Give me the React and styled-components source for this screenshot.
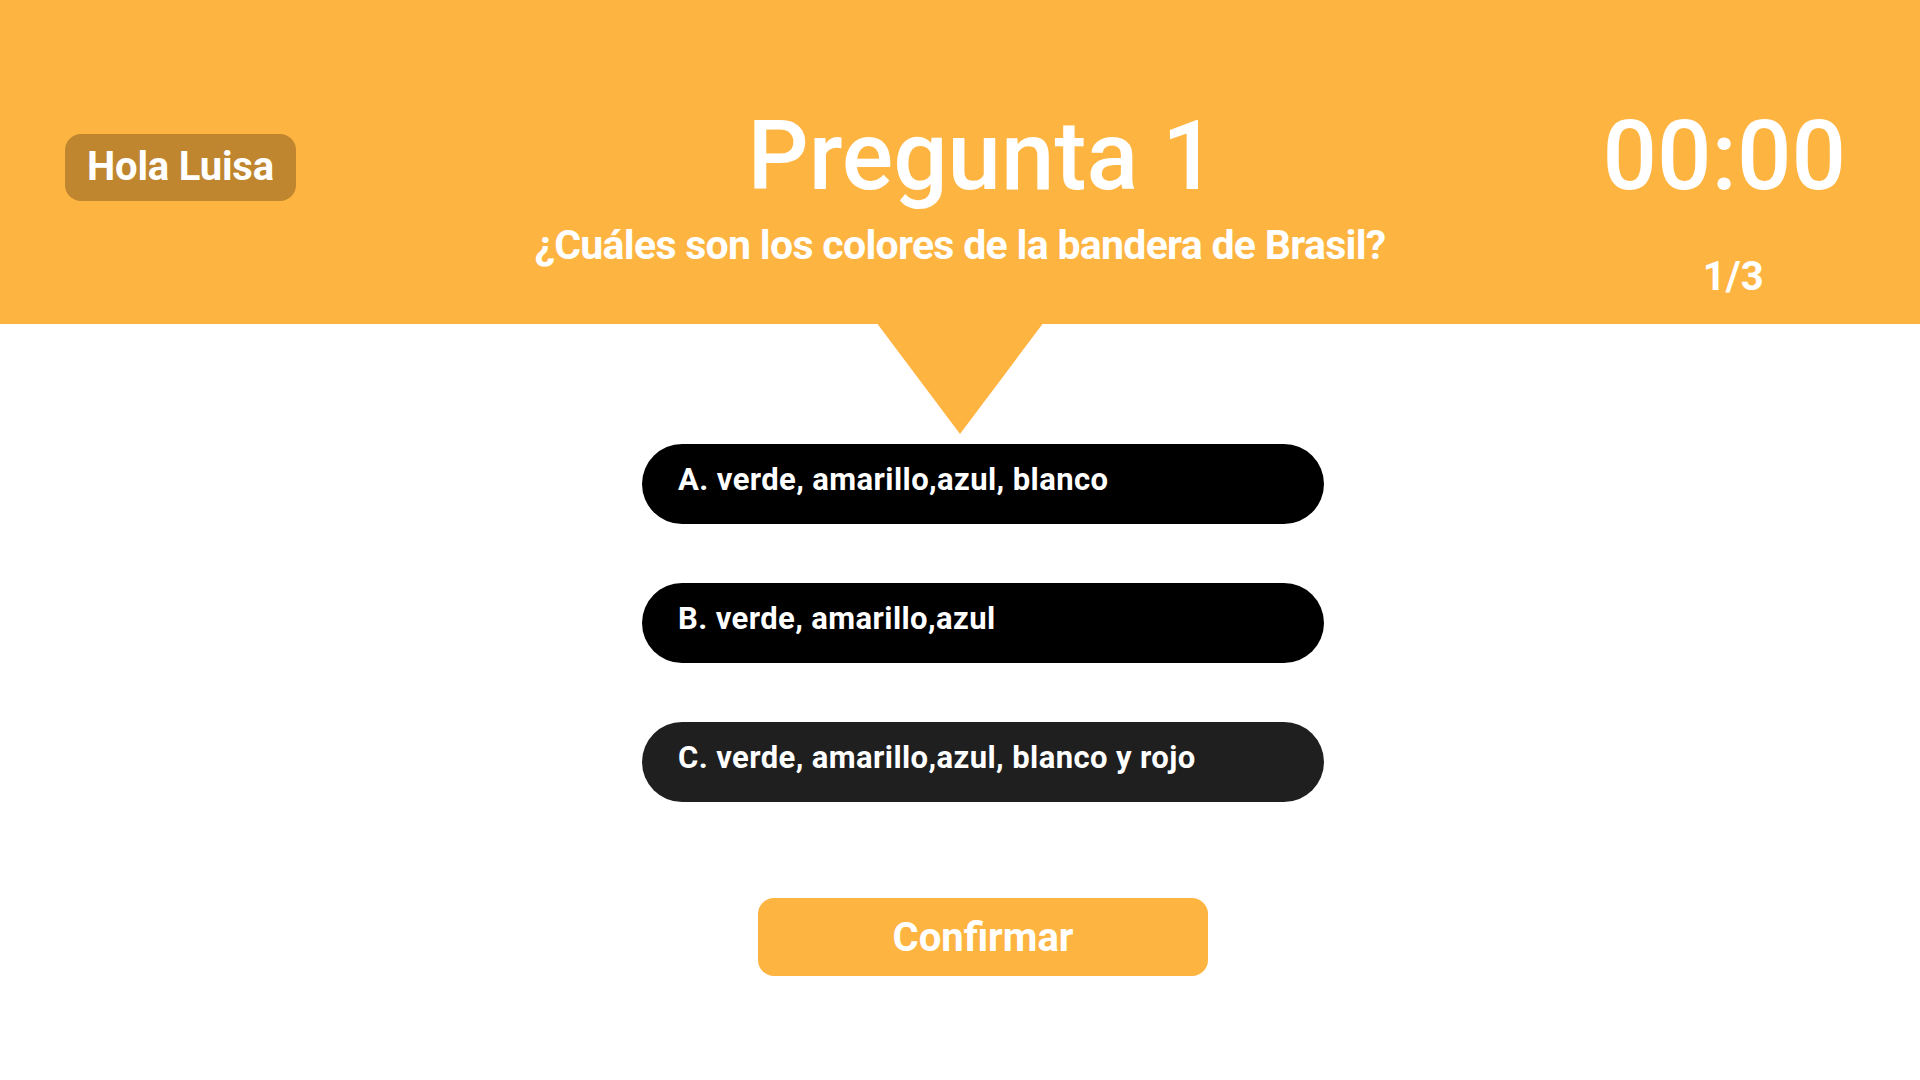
import React, { useState } from "react";
import styled, { createGlobalStyle } from "styled-components";

const GlobalStyle = createGlobalStyle`
    * { box-sizing: border-box; }
    body {
        margin: 0;
        background: #ffffff;
        font-family: Roboto, "Liberation Sans", sans-serif;
    }
`;

const Page = styled.div`
    min-height: 100vh;
    display: flex;
    flex-direction: column;
`;

const Header = styled.header`
    height: 324px;
    background-color: #FEB441;
    display: grid;
    grid-template-columns: 1fr auto 1fr;
    align-items: start;
    padding-top: 108px;
    color: #fff;
`;

const Saludo = styled.div`
    justify-self: start;
    margin: 26px 0 0 65px;
    background-color: #BF862F;
    border-radius: 16px;
    padding: 9px 22px 10px;
    font-size: 40px;
    font-weight: 700;
    line-height: 48px;
    letter-spacing: -0.2px;
`;

const Centro = styled.div`
    display: flex;
    flex-direction: column;
    align-items: center;
`;

const Titulo = styled.h1`
    margin: 0;
    padding-left: 44px;
    font-size: 96px;
    font-weight: 500;
    line-height: 96px;
`;

const Pregunta = styled.p`
    margin: 16px 0 0;
    font-size: 41px;
    font-weight: 700;
    line-height: 50px;
    letter-spacing: -0.7px;
`;

const Lado = styled.div`
    justify-self: end;
    margin-right: 74px;
    display: flex;
    flex-direction: column;
    align-items: center;
`;

const Reloj = styled.div`
    font-size: 96px;
    font-weight: 500;
    line-height: 96px;
`;

const Contador = styled.div`
    margin-top: 49px;
    padding-left: 18px;
    font-size: 40px;
    font-weight: 700;
    line-height: 48px;
`;

const Pico = styled.div`
    align-self: center;
    width: 165px;
    height: 110px;
    background-color: #FEB441;
    clip-path: polygon(0 0, 100% 0, 50% 100%);
`;

const Contenido = styled.main`
    display: flex;
    flex-direction: column;
    align-items: center;
    padding-left: 46px;
    margin-top: 10px;
`;

const Opciones = styled.div`
    display: flex;
    flex-direction: column;
    gap: 59px;
`;

const Opcion = styled.button`
    width: 682px;
    height: 80px;
    border: none;
    border-radius: 40px;
    background-color: ${(p) => (p.$activa ? "#1F1F1F" : "#000000")};
    color: #fff;
    font-family: inherit;
    font-size: 31px;
    font-weight: 700;
    letter-spacing: 0.4px;
    text-align: left;
    padding: 0 0 10px 36px;
    cursor: pointer;
`;

const Confirmar = styled.button`
    margin-top: 96px;
    width: 450px;
    height: 78px;
    border: none;
    border-radius: 16px;
    background-color: #FEB441;
    color: #fff;
    font-family: inherit;
    font-size: 40px;
    font-weight: 700;
    cursor: pointer;
`;

const opciones = [
    { letra: "A", texto: "verde, amarillo,azul, blanco" },
    { letra: "B", texto: "verde, amarillo,azul" },
    { letra: "C", texto: "verde, amarillo,azul, blanco y rojo" },
];

export default function App() {
    const [elegida, setElegida] = useState("C");

    return (
        <Page>
            <GlobalStyle />
            <Header>
                <Saludo>Hola Luisa</Saludo>
                <Centro>
                    <Titulo>Pregunta 1</Titulo>
                    <Pregunta>¿Cuáles son los colores de la bandera de Brasil?</Pregunta>
                </Centro>
                <Lado>
                    <Reloj>00:00</Reloj>
                    <Contador>1/3</Contador>
                </Lado>
            </Header>
            <Pico />
            <Contenido>
                <Opciones>
                    {opciones.map((o) => (
                        <Opcion
                            key={o.letra}
                            $activa={elegida === o.letra}
                            onClick={() => setElegida(o.letra)}
                        >
                            {o.letra}. {o.texto}
                        </Opcion>
                    ))}
                </Opciones>
                <Confirmar>Confirmar</Confirmar>
            </Contenido>
        </Page>
    );
}
